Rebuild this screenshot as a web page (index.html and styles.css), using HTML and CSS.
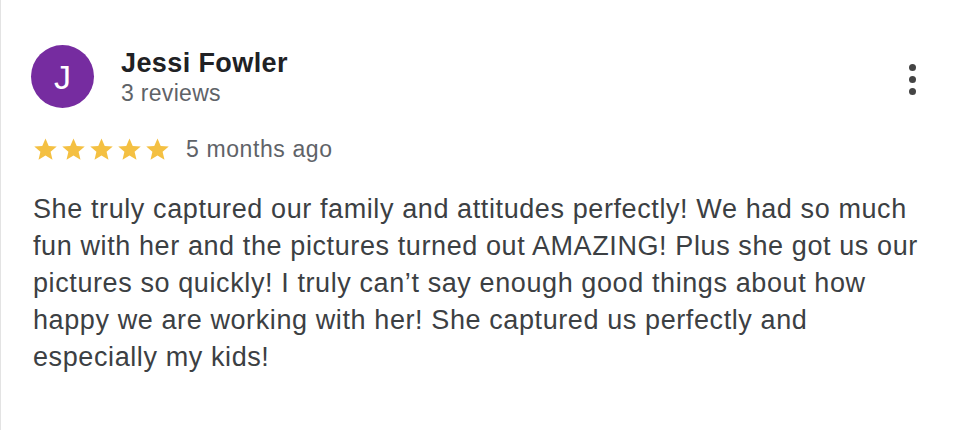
FILE: index.html
```html
<!DOCTYPE html>
<html>
<head>
<meta charset="utf-8">
<link rel="stylesheet" href="styles.css">
</head>
<body>
<div class="card">
  <div class="header">
    <div class="avatar">J</div>
    <div class="who">
      <div class="name">Jessi Fowler</div>
      <div class="count">3 reviews</div>
    </div>
    <div class="menu"><span></span><span></span><span></span></div>
  </div>
  <div class="rating">
    <div class="stars">
      <svg viewBox="0 0 24 24"><path d="M12 1.5l3.1 7.1 7.7.6-5.9 5 1.8 7.6L12 17.8l-6.7 4 1.8-7.6-5.9-5 7.7-.6z"/></svg>
      <svg viewBox="0 0 24 24"><path d="M12 1.5l3.1 7.1 7.7.6-5.9 5 1.8 7.6L12 17.8l-6.7 4 1.8-7.6-5.9-5 7.7-.6z"/></svg>
      <svg viewBox="0 0 24 24"><path d="M12 1.5l3.1 7.1 7.7.6-5.9 5 1.8 7.6L12 17.8l-6.7 4 1.8-7.6-5.9-5 7.7-.6z"/></svg>
      <svg viewBox="0 0 24 24"><path d="M12 1.5l3.1 7.1 7.7.6-5.9 5 1.8 7.6L12 17.8l-6.7 4 1.8-7.6-5.9-5 7.7-.6z"/></svg>
      <svg viewBox="0 0 24 24"><path d="M12 1.5l3.1 7.1 7.7.6-5.9 5 1.8 7.6L12 17.8l-6.7 4 1.8-7.6-5.9-5 7.7-.6z"/></svg>
    </div>
    <span class="ago">5 months ago</span>
  </div>
  <p class="text">She truly captured our family and attitudes perfectly! We had so much fun with her and the pictures turned out AMAZING! Plus she got us our pictures so quickly! I truly can’t say enough good things about how happy we are working with her! She captured us perfectly and especially my kids!</p>
</div>
</body>
</html>
```

FILE: styles.css
```css
html, body {
  margin: 0;
  padding: 0;
  background: #fff;
}
.card {
  box-sizing: border-box;
  width: 968px;
  height: 430px;
  border-left: 1px solid #e3e3e3;
  padding: 47px 0 0 32px;
  font-family: "Liberation Sans", Arial, sans-serif;
}
.header {
  display: flex;
  align-items: flex-start;
}
.avatar {
  width: 63px;
  height: 63px;
  margin: -2px 0 0 -2px;
  border-radius: 50%;
  background: #762ca0;
  color: #fff;
  font-size: 34px;
  line-height: 1;
  display: flex;
  align-items: center;
  justify-content: center;
  flex: none;
}
.who {
  margin-left: 27px;
  margin-top: 1px;
  flex: 1;
}
.name {
  font-weight: bold;
  font-size: 27px;
  letter-spacing: 0.4px;
  line-height: 31px;
  color: #202124;
}
.count {
  font-size: 23px;
  letter-spacing: 0.3px;
  line-height: 28px;
  color: #5f6368;
}
.menu {
  display: flex;
  flex-direction: column;
  gap: 5px;
  margin: 17px 52px 0 0;
}
.menu span {
  width: 7px;
  height: 7px;
  border-radius: 50%;
  background: #444;
}
.rating {
  display: flex;
  align-items: center;
  margin-top: 28px;
}
.stars {
  display: flex;
  gap: 3px;
}
.stars svg {
  width: 25px;
  height: 25px;
  fill: #f4c042;
}
.ago {
  margin-left: 16px;
  font-size: 23px;
  letter-spacing: 0.6px;
  color: #5f6368;
}
.text {
  margin: 28px 0 0 0;
  width: 898px;
  font-size: 27px;
  letter-spacing: 0.6px;
  line-height: 37px;
  color: #3c4043;
}
```
